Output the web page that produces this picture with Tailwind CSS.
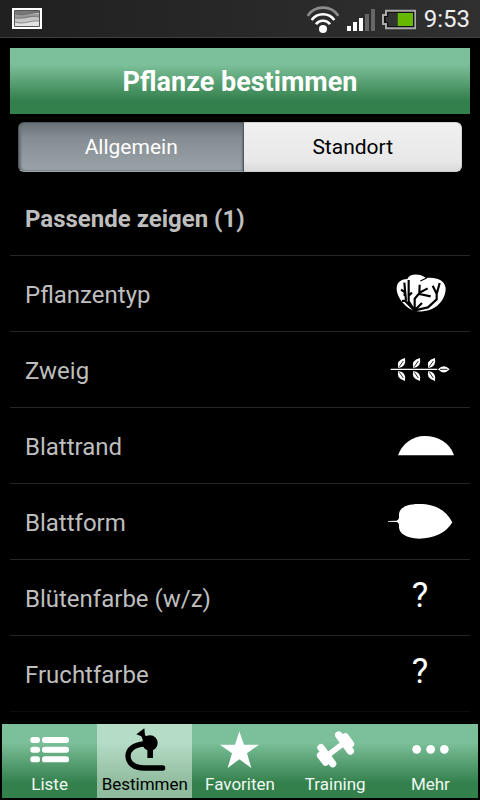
<!DOCTYPE html>
<html lang="de">
<head>
<meta charset="utf-8">
<meta name="viewport" content="width=device-width, initial-scale=1">
<title>Pflanze bestimmen</title>
<script src="https://cdn.jsdelivr.net/npm/@tailwindcss/browser@4"></script>
</head>
<body class="flex min-h-screen flex-col bg-black font-['Roboto',sans-serif] text-white">
<div class="flex h-[38px] shrink-0 items-center justify-between border-b border-[#404040] bg-linear-to-r from-[#202020] to-[#303030] pr-[10px] pl-3">
  <svg class="h-[37px] w-[30px]" viewBox="0 0 30 37" aria-hidden="true">
    <rect y="8" width="30" height="21" fill="#fff"/>
    <rect x="2" y="10" width="26" height="17" rx="1" fill="#555"/>
    <rect x="3" y="11" width="24" height="15" fill="#c4c4c4"/>
    <path d="M3 11h24v2c-7-1-10 5-24 1z" fill="#777"/>
    <path d="M3 15c10 1 15-3 24-1v3c-7-2-13 3-24 1z" fill="#999"/>
    <path d="M3 22c9 3 16-2 24-1v5H3z" fill="#e2e2e2"/>
    <path d="M3 14c12 3 15-3 24-2M3 18c10 1 15-3 24-1M3 22c9 3 16-2 24-1" fill="none" stroke="#666" stroke-width=".7"/>
  </svg>
  <div class="flex items-center">
    <svg class="h-[37px] w-[112px]" viewBox="39 0 336 111" aria-hidden="true">
      <g fill="none" stroke="#fff" stroke-width="8">
        <path d="M50 47A56 56 0 0 1 142 47" stroke="#8c8c8c"/>
        <path d="M62 60A42 42 0 0 1 130 60"/>
        <path d="M75 73A26 26 0 0 1 117 73"/>
      </g>
      <circle cx="96" cy="87" r="12" fill="#fff"/>
      <path d="M168 78h12v15h-12zM186 66h12v27h-12zM204 54h12v39h-12z" fill="#fff"/>
      <path d="M222 42h12v51h-12zM240 27h12v66h-12z" fill="#666"/>
      <path d="M285 32h88v53h-88V72h-9V45h9z" fill="#111" stroke="#aaa" stroke-width="6"/>
      <path d="M292 39h28v39h-28V66h-8V51h8z" fill="#333"/>
      <path d="M320 39h46v39h-46z" fill="#66b800"/>
    </svg>
    <span class="pl-2 text-2xl text-[#f0f0f0]">9:53</span>
  </div>
</div>

<main class="flex flex-1 flex-col px-[10px] pt-[10px]">
  <h1 class="flex h-[66px] items-center justify-center bg-linear-to-b from-[#7bc09a] from-25% to-[#33804c] to-80% pt-[2px] text-[27px] font-bold">Pflanze bestimmen</h1>

  <div class="m-2 flex h-[50px] text-[21px]">
    <button type="button" aria-pressed="true" class="w-[51%] rounded-l-md border border-[#4f575c] border-b-[#9aa3a7] bg-linear-to-b from-[#697176] via-[#858d93] via-30% to-[#9aa3a7] pt-[2px] text-white shadow-[inset_2px_0_2px_#697176,inset_-1px_0_2px_#697176]">Allgemein</button>
    <button type="button" aria-pressed="false" class="flex-1 rounded-r-md border border-l-0 border-[#d0d0d0] bg-linear-to-b from-[#f0f0f0] via-[#e8e8e8] via-80% to-[#dadada] pt-[2px] text-black">Standort</button>
  </div>

  <ul class="text-2xl text-[#bebebe]">
    <li><button type="button" class="flex h-[76px] w-full items-center border-b border-[#262626] px-[15px] pt-[2px] font-bold">Passende zeigen (1)</button></li>
    <li><button type="button" class="flex h-[76px] w-full items-center justify-between border-b border-[#262626] pr-[10px] pl-[15px]"><span class="pt-[2px]">Pflanzentyp</span>
      <svg class="h-[75px] w-20" viewBox="0 -12 240 225" aria-hidden="true">
        <path d="M50 86C50 64 66 58 82 57C89 40 119 40 138 54C168 50 194 60 197 84C198 112 178 138 154 148C137 155 117 156 104 152C78 146 50 112 50 86Z" fill="#fff"/>
        <g fill="none" stroke="#000" stroke-width="6.5" stroke-linejoin="round">
          <path d="M121 63L140 54" stroke-width="4"/>
          <path d="M104 152L86 124L86 60M78 122L73 68M63 89L74 96L74 108M86 107L96 98M66 123L75 122L104 152" />
          <path d="M104 152L104 116L118 100L119 74M117 99L143 85M118 102L152 109M104 151L126 129"/>
          <path d="M104 151L144 142L170 118L170 101L158 77M170 102L179 69"/>
        </g>
      </svg></button></li>
    <li><button type="button" class="flex h-[76px] w-full items-center justify-between border-b border-[#262626] pr-[10px] pl-[15px]"><span class="pt-[2px]">Zweig</span>
      <svg class="h-[75px] w-20" viewBox="0 216 240 225" aria-hidden="true">
        <path d="M32 328H172" stroke="#fff" stroke-width="3.5"/>
        <g fill="#fff">
          <path d="M55 324Q47 301 75 294Q80 321 55 324ZM55 333Q47 356 75 363Q80 336 55 333Z"/>
          <path d="M100 324Q92 301 120 294Q125 321 100 324ZM100 333Q92 356 120 363Q125 336 100 333Z"/>
          <path d="M145 324Q137 301 165 294Q170 321 145 324ZM145 333Q137 356 165 363Q170 336 145 333Z"/>
          <path d="M174 328Q191 310 209 328Q191 347 174 328Z"/>
        </g>
        <path d="M58 320L70 303M58 337L70 354M103 320L115 303M103 337L115 354M148 320L160 303M148 337L160 354M180 328H202" stroke="#000" stroke-width="2.5"/>
      </svg></button></li>
    <li><button type="button" class="flex h-[76px] w-full items-center justify-between border-b border-[#262626] pr-[10px] pl-[15px]"><span class="pt-[2px]">Blattrand</span>
      <svg class="h-[75px] w-20" viewBox="0 -6 240 225" aria-hidden="true">
        <path d="M54 136C66 102 96 78 134 78C174 78 210 98 222 136Z" fill="#fff"/>
      </svg></button></li>
    <li><button type="button" class="flex h-[76px] w-full items-center justify-between border-b border-[#262626] pr-[10px] pl-[15px]"><span class="pt-[2px]">Blattform</span>
      <svg class="h-[75px] w-20" viewBox="0 222 240 225" aria-hidden="true">
        <path d="M24 333L50 332Q58 330 57 318C55 294 78 282 117 282C164 282 198 300 217 337C198 370 160 386 117 386C78 385 56 370 57 350Q58 338 50 336L24 335Z" fill="#fff"/>
      </svg></button></li>
    <li><button type="button" class="flex h-[76px] w-full items-center justify-between border-b border-[#262626] pr-[10px] pl-[15px]"><span class="pt-[2px]">Blütenfarbe (w/z)</span>
      <span class="w-20 pb-[2px] text-center text-[35px] text-white">?</span></button></li>
    <li><button type="button" class="flex h-[76px] w-full items-center justify-between border-b border-[#0c0c0c] pr-[10px] pl-[15px]"><span class="pt-[2px]">Fruchtfarbe</span>
      <span class="w-20 pb-[2px] text-center text-[35px] text-white">?</span></button></li>
  </ul>
</main>

<nav class="mx-[2px] mt-3 mb-[2px] grid h-[74px] shrink-0 grid-cols-5 bg-linear-to-b from-[#7bc09a] from-25% to-[#33804c] to-80% text-[17px] text-[#f0f8f2]">
  <a href="#liste" class="flex flex-col items-center pt-1">
    <svg class="h-11 w-[45px]" viewBox="81 84 135 132" fill="#fff" aria-hidden="true">
      <rect x="91" y="111" width="29" height="18" rx="8"/><rect x="126" y="111" width="81" height="18" rx="8"/>
      <rect x="91" y="140" width="29" height="18" rx="8"/><rect x="126" y="140" width="81" height="18" rx="8"/>
      <rect x="91" y="169" width="29" height="18" rx="8"/><rect x="126" y="169" width="81" height="18" rx="8"/>
    </svg>
    <span class="leading-6">Liste</span></a>
  <a href="#bestimmen" aria-current="page" class="flex flex-col items-center bg-[#edf7f1]/50 pt-1 text-black">
    <svg class="h-11 w-[45px]" viewBox="366 84 135 132" aria-hidden="true">
      <path d="M432 132C401 134 384 149 384 168C384 190 404 204 432 204H488" fill="none" stroke="#000" stroke-width="16" stroke-linecap="round"/>
      <circle cx="450" cy="129" r="23"/>
      <path d="M442 140H459V174H442Z"/>
      <path d="M409 103L433 85L435 105L443 113L430 124L424 109Z"/>
    </svg>
    <span class="leading-6">Bestimmen</span></a>
  <a href="#favoriten" class="flex flex-col items-center pt-1">
    <svg class="h-11 w-[45px]" viewBox="-69 84 135 132" fill="#fff" aria-hidden="true">
      <path d="M-2 94L12 134H57L21 160L34 204L-2 178L-37 204L-24 160L-60 134H-15Z"/>
    </svg>
    <span class="leading-6">Favoriten</span></a>
  <a href="#training" class="flex flex-col items-center pt-1">
    <svg class="h-11 w-[45px]" viewBox="216 84 135 132" fill="none" stroke="#fff" stroke-linecap="round" aria-hidden="true">
      <path d="M258 167L310 128" stroke-width="17"/>
      <path d="M293 105L328 153M240 143L275 191" stroke-width="22"/>
      <path d="M313 110L329 132M238 166L254 187" stroke-width="21"/>
    </svg>
    <span class="leading-6">Training</span></a>
  <a href="#mehr" class="flex flex-col items-center pt-1">
    <svg class="h-11 w-[45px]" viewBox="501 84 135 132" fill="#fff" aria-hidden="true">
      <circle cx="527" cy="148" r="13"/><circle cx="569" cy="148" r="13"/><circle cx="610" cy="148" r="13"/>
    </svg>
    <span class="leading-6">Mehr</span></a>
</nav>
</body>
</html>
